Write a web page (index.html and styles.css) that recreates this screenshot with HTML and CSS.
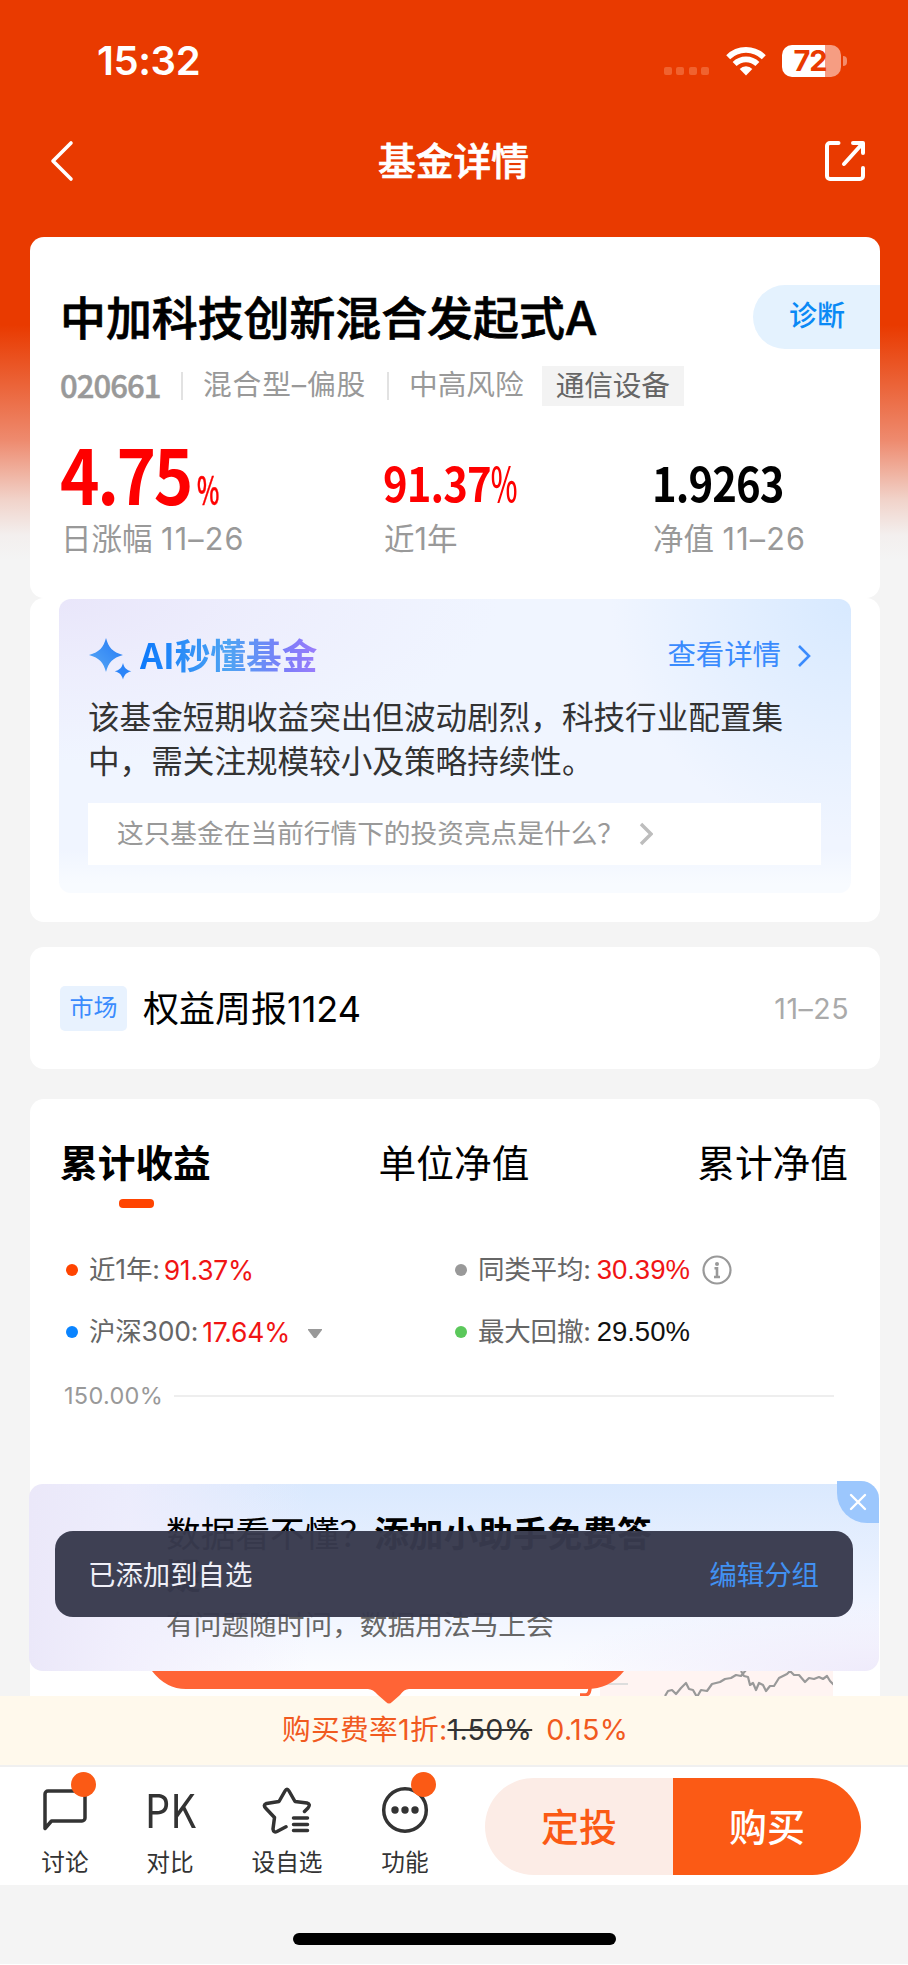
FILE: index.html
```html
<!DOCTYPE html>
<html lang="zh-CN">
<head>
<meta charset="utf-8">
<title>基金详情</title>
<link rel="stylesheet" href="styles.css">
</head>
<body>
<div class="phone">
  <header class="top">
    <div class="status">
      <span class="clock">15:32</span>
      <div class="signal"><i></i><i></i><i></i><i></i></div>
      <svg class="wifi" viewBox="0 0 40 30" width="40" height="30"><g fill="none" stroke="#fff" stroke-width="5.6"><path d="M2.2 11.2a25.2 25.2 0 0 1 35.6 0"/><path d="M8.6 18.1a16.2 16.2 0 0 1 22.8 0"/></g><path d="M20 29.5l-6.3-6.6a9 9 0 0 1 12.6 0z" fill="#fff"/></svg>
      <div class="battery"><span>72</span></div>
      <i class="nub"></i>
    </div>
    <div class="nav">
      <svg viewBox="0 0 24 42" width="24" height="42"><path d="M21 3L3 21l18 18" fill="none" stroke="#fff" stroke-width="3.6" stroke-linecap="round" stroke-linejoin="round"/></svg>
      <h1>基金详情</h1>
      <svg viewBox="0 0 42 42" width="42" height="42"><g fill="none" stroke="#fff" stroke-width="4" stroke-linecap="round" stroke-linejoin="round"><path d="M14.500 3H6a3 3 0 0 0-3 3v30a3 3 0 0 0 3 3h30a3 3 0 0 0 3-3v-8"/><path d="M29 3h10v10M38.500 3.500L20 24"/></g></svg>
    </div>
  </header>

  <section class="card fund">
    <div class="fund-head">
      <h2>中加科技创新混合发起式A</h2>
      <span class="diagnose">诊断</span>
    </div>
    <div class="meta">
      <b>020661</b><i></i><span class="kind">混合型–偏股</span><i></i><span>中高风险</span><em>通信设备</em>
    </div>
    <div class="figures">
      <div class="fig day"><div class="num red big">4.75<small>%</small></div><p>日涨幅 <span>11–26</span></p></div>
      <div class="fig year"><div class="num red">91.37<small>%</small></div><p>近1年</p></div>
      <div class="fig"><div class="num">1.9263</div><p>净值 <span>11–26</span></p></div>
    </div>
  </section>

  <section class="card insight">
    <div class="ai">
      <div class="ai-head">
        <svg viewBox="0 0 44 44" width="44" height="44"><defs><linearGradient id="spark" x1="0" y1="1" x2="1" y2="0"><stop offset="0" stop-color="#5aaaf5"/><stop offset="1" stop-color="#2379f5"/></linearGradient></defs><path d="M18 1c2.500 9.500 6.500 14 17 17-10.500 3-14.500 7.500-17 17C15.500 25.500 11.500 21 1 18 11.500 15 15.500 10.500 18 1z" fill="url(#spark)"/><path d="M35 26c1.300 4.800 3.300 7 8.300 8.300-5 1.300-7 3.500-8.300 8.300-1.300-4.800-3.300-7-8.300-8.300 5-1.300 7-3.500 8.300-8.300z" fill="#2b84f8"/></svg>
        <h3>AI秒懂基金</h3>
        <span class="more">查看详情</span>
        <svg viewBox="0 0 14 24" width="14" height="24"><path d="M2 2l10 10L2 22" fill="none" stroke="#3a8bfd" stroke-width="2.600"/></svg>
      </div>
      <p class="summary">该基金短期收益突出但波动剧烈，科技行业配置集<br>中，需关注规模较小及策略持续性。</p>
      <div class="ask"><span>这只基金在当前行情下的投资亮点是什么？</span><svg viewBox="0 0 14 24" width="14" height="24"><path d="M2 2l10 10L2 22" fill="none" stroke="#bdbdbd" stroke-width="3.400"/></svg></div>
    </div>
  </section>

  <section class="card report">
    <span class="tag">市场</span><span class="report-title">权益周报1124</span><time>11–25</time>
  </section>

  <section class="card chart">
    <div class="tabs"><span class="on">累计收益</span><span>单位净值</span><span>累计净值</span></div>
    <div class="legend">
      <div><i class="dot orange"></i><span>近1年:</span><b class="hot">91.37%</b></div>
      <div><i class="dot gray"></i><span>同类平均:</span><b class="hot wide">30.39%</b><svg class="info" viewBox="0 0 30 30" width="30" height="30"><circle cx="15" cy="15" r="13.500" fill="none" stroke="#999" stroke-width="2.200"/><circle cx="15" cy="9" r="2" fill="#999"/><path d="M12.500 13.300H15V22M12 22h6" fill="none" stroke="#999" stroke-width="2.600"/></svg></div>
      <div><i class="dot blue"></i><span>沪深300:</span><b class="hot">17.64%</b><svg class="caret" viewBox="0 0 14 10" width="14" height="10"><path d="M0 0h14v1L8 9H6L0 1z" fill="#999"/></svg></div>
      <div><i class="dot green"></i><span>最大回撤:</span><b class="wide">29.50%</b></div>
    </div>
    <div class="axis"><span>150.00%</span><i></i></div>
    <svg class="plot" viewBox="0 0 803 25" width="803" height="25"><path d="M570 0h233v25H570z" fill="#fff4f2"/><path d="M570 13h28" stroke="#ddd" stroke-width="2"/><path d="M550 24h6q4-1 4-8" fill="none" stroke="#ff6436" stroke-width="3.500"/><path d="M635 25l3-5 4-1 4 4 5-6 5-5 3 6 4 1 4 7 4-7 6 1 5-7 8-2 5-3 6-1 5-3 5 1 5-6M711 0l3 5 4 1 2 8 3-2 3 7 3-7 4 2 3 6 4-5 4 0 5-8 4-2 4-2 3-3 4 4 5 0 6 7 4-4 5 1 5-2 4 2 4-3 3 5 4 4 4-1 4 6 3 7 5-3 4-6" fill="none" stroke="#999" stroke-width="2.200" stroke-linejoin="round"/></svg>
  </section>

  <div class="fee">购买费率1折:<s>1.50%</s><span>0.15%</span></div>

  <nav class="actions">
    <div class="item talk"><svg viewBox="0 0 48 48" width="48" height="48"><path d="M4.500 42.500V8a3 3 0 0 1 3-3h34a3 3 0 0 1 3 3v24a3 3 0 0 1-3 3H11z" transform="translate(-.5 0)" fill="none" stroke="#333" stroke-width="3.500" stroke-linejoin="round"/></svg><i class="badge"></i><span>讨论</span></div>
    <div class="item pk"><strong>PK</strong><span>对比</span></div>
    <div class="item star"><svg viewBox="0 0 50 48" width="50" height="48"><g fill="none" stroke="#333" stroke-width="3.500" stroke-linecap="round" stroke-linejoin="round"><path d="M42.500 25.500l3.500-3.500q3-4-1-5l-12-1.500L27 5q-2-3.500-4 0l-6 10.500L4.500 17.500q-4 1.500-.5 5l8.500 9L11 43q.5 4 4 2.500l9-4.700"/><path d="M31.500 32h14M31.500 38.500h14M31.500 44.500h14"/></g></svg><span>设自选</span></div>
    <div class="item func"><svg viewBox="0 0 48 48" width="48" height="48"><circle cx="24" cy="24" r="21.300" fill="none" stroke="#333" stroke-width="3.500"/><g fill="#333"><circle cx="14" cy="24" r="3.700"/><circle cx="24" cy="24" r="3.700"/><circle cx="34" cy="24" r="3.700"/></g></svg><i class="badge"></i><span>功能</span></div>
    <div class="buttons"><span class="plan">定投</span><span class="buy">购买</span></div>
  </nav>
  <footer class="home"><i></i></footer>

  <svg class="bubble" viewBox="0 0 474 34" width="474" height="34"><path d="M0 0h472q-14 18-38 18H257q-5 0-9 6l-8 7q-3 3-6 0l-8-7q-5-6-10-6H34Q14 18 0 0z" fill="#ff6436"/></svg>

  <aside class="banner">
    <div class="banner-title">数据看不懂？<b>添加小助手免费答</b><br><b>疑!</b></div>
    <div class="banner-sub">有问题随时问，数据用法马上会</div>
    <div class="close"><svg viewBox="0 0 18 18" width="18" height="18"><path d="M2 2l14 14M16 2L2 16" stroke="#fff" stroke-width="2.400" stroke-linecap="round"/></svg></div>
  </aside>
  <div class="toast"><span>已添加到自选</span><a>编辑分组</a></div>
</div>
</body>
</html>
```

FILE: styles.css
```css
* { box-sizing: border-box; margin: 0; padding: 0; }
body {
  width: 908px;
  height: 1965px;
  overflow: hidden;
  font-family: Inter, "Noto Sans CJK SC", sans-serif;
  background: #fff;
  color: #000;
}
i, em { font-style: normal; display: block; }
svg { display: block; flex: none; }
.phone {
  position: relative;
  width: 908px;
  height: 1964px;
  overflow: hidden;
  white-space: nowrap;
  background: linear-gradient(#e93a00 0, #e93a00 325px, #ea5626 366px, #ee8a6e 440px, #f1d3ca 500px, #f3efee 535px, #f4f4f4 560px);
}

/* Status bar and title */
.top { height: 237px; color: #fff; }
.status { height: 121px; padding: 0 61px 0 97px; display: flex; align-items: center; }
.clock { font-size: 40px; font-weight: 600; line-height: 48px; letter-spacing: -0.4px; margin-right: auto; }
.signal { display: flex; gap: 4.500px; margin: 21px 17px 0 0; }
.signal i { width: 8px; height: 8px; border-radius: 2px; background: #f0622f; }
.wifi { margin-right: 16px; }
.battery {
  width: 59px; height: 32px; border-radius: 10px; padding-right: 3px;
  background: linear-gradient(90deg, #fff 43px, #f69d82 43px);
  color: #e93a00; font-size: 29px; font-weight: 700; line-height: 32px; text-align: center; letter-spacing: -1px;
}
.nub { width: 4px; height: 10px; margin-left: 2px; border-radius: 0 4px 4px 0; background: #f48c6b; }
.nav { height: 80px; padding: 0 42px 0 50px; display: flex; align-items: center; justify-content: space-between; }
.nav h1 { font-size: 37.700px; font-weight: 500; line-height: 48px; margin-left: 9px; -webkit-text-stroke: .7px #fff; }

.card { margin: 0 28px 0 30px; background: #fff; border-radius: 14px; }

/* Fund overview */
.fund { height: 361px; padding: 48px 0 0 30px; }
.fund-head { display: flex; align-items: center; justify-content: space-between; height: 64px; }
.fund-head h2 { font-size: 45.900px; line-height: 64px; font-weight: 500; padding-top: 3px; -webkit-text-stroke: .7px #000; }
.diagnose { width: 127px; height: 64px; border-radius: 32px 0 0 32px; background: #e4f2fe; color: #0a89f5; font-size: 28px; line-height: 63px; padding-left: 36px; font-weight: 500; }
.meta { display: flex; align-items: center; height: 40px; margin-top: 17px; font-size: 28.700px; line-height: 36px; color: #999; }
.meta span { margin-top: -2px; }
.meta b { font-family: "Noto Sans CJK SC", sans-serif; font-size: 31px; font-weight: 500; line-height: 40px; letter-spacing: -.9px; width: 121px; margin-top: -3px; -webkit-text-stroke: .5px #999; }
.meta i { width: 2px; height: 28px; background: #e2e2e2; margin-right: 20px; }
.meta .kind { width: 184px; letter-spacing: .9px; }
.meta em { margin-left: 18px; background: #f3f3f3; color: #666; padding: 0 14px; height: 40px; line-height: 40px; letter-spacing: -.2px; }
.figures { display: flex; margin-top: 34px; }
.fig.day { width: 323px; }
.fig.year { width: 269px; }
.num { height: 72px; font: 700 47px/72px "Noto Sans CJK SC", sans-serif; padding-top: 6px; letter-spacing: -1px; display: flex; transform: scaleX(.89); transform-origin: 0 50%; }
.num.big { font-size: 75px; letter-spacing: -2.700px; padding-top: 0; line-height: 66px; transform: scaleX(.895); }
.num small { width: 30px; font-size: 47px; font-weight: 500; transform: scaleX(.68); transform-origin: 0 50%; letter-spacing: 0; }
.num.big small { font-size: 39px; margin: 25px 0 0 7px; line-height: 46px; height: 46px; -webkit-text-stroke: .5px #fe0000; }
.red { color: #fe0000; }
.fig p { font-size: 30.500px; line-height: 44px; color: #999; padding-left: 1px; margin-top: 5px; }
.fig p span { letter-spacing: 1.200px; }

/* AI summary */
.insight { height: 324px; padding: 1px 29px; }
.ai {
  height: 294px; border-radius: 12px; padding: 32px 30px 0 29px;
  background:
    linear-gradient(rgba(248,251,255,0) 0, rgba(248,251,255,0) 250px, #f8fbff 285px),
    radial-gradient(circle at 100% 0, #d7e9ff 0, rgba(215,233,255,0) 240px),
    radial-gradient(ellipse at 0 0, #e9e6fa 0, rgba(236,235,252,.7) 200px, rgba(240,245,255,0) 440px),
    #f0f5ff;
}
.ai-head { height: 58px; display: flex; align-items: center; }
.ai-head h3 { font: 700 35.700px/50px "Noto Sans CJK SC", sans-serif; margin: 0 auto 12px 8px; background: linear-gradient(90deg, #0b78fb, #4fa4f3 50%, #7c7df9 82%, #9a7dfb); -webkit-background-clip: text; background-clip: text; color: transparent; }
.more { font-size: 28.400px; line-height: 40px; color: #3a8bfd; margin: 0 16px 10px 0; }
.ai-head svg:first-child { margin-bottom: 2px; }
.ai-head svg:last-child { margin: 0 10px 8px 0; }
.summary { font-size: 31.600px; line-height: 44px; color: #333; margin-top: 7px; }
.ask { height: 62px; margin-top: 19px; background: #fff; display: flex; align-items: center; gap: 15px; padding-left: 29px; color: #999; font-size: 26.700px; line-height: 36px; }
.ask span { margin-top: -3px; }

/* Weekly report */
.report { height: 122px; margin-top: 25px; padding: 0 31px 0 30px; display: flex; align-items: center; }
.tag { width: 67px; height: 45px; border-radius: 5px; background: #e8f2fe; color: #3a8bfd; font-size: 24px; line-height: 44px; text-align: center; }
.report-title { font-size: 36px; line-height: 50px; margin: 2px auto 0 16px; }
.report time { font-size: 28.500px; color: #aaa; letter-spacing: .5px; }

/* Returns */
.chart { height: 597px; margin-top: 30px; border-radius: 14px 14px 0 0; position: relative; }
.tabs { display: flex; justify-content: space-between; padding: 39px 32px 0 30px; font-size: 37.700px; line-height: 50px; }
.tabs span { height: 72px; }
.tabs .on { font-weight: 700; }
.tabs .on::after { content: ""; display: block; width: 35px; height: 9px; border-radius: 4px; background: #ff4400; margin: 11px 0 0 59px; }
.legend { display: grid; grid-template-columns: 389px 1fr; grid-auto-rows: 62px; padding: 29px 0 0 36px; font-size: 26.500px; line-height: 36px; color: #666; }
.legend > div { display: flex; align-items: center; }
.legend span { margin-top: -2px; letter-spacing: -.2px; }
.dot { width: 12px; height: 12px; border-radius: 50%; margin-right: 11px; }
.orange { background: #ff4400; }
.gray { background: #999; }
.blue { background: #0a84ff; }
.green { background: #5bc85b; }
.legend b { font-weight: 400; margin-left: 4px; color: #111; letter-spacing: -.2px; }
.legend b.hot { color: #f01414; }
.legend b.wide { margin-left: 6px; font-family: "Liberation Sans", sans-serif; font-size: 27.500px; letter-spacing: 0; }
.info { margin-left: 12px; }
.caret { margin: 4px 0 0 18px; }
.axis { display: flex; align-items: center; margin: 18px 46px 0 34px; font-size: 23.500px; line-height: 30px; color: #999; letter-spacing: .3px; }
.axis span { width: 110px; }
.axis i { flex: 1; height: 2px; background: #eee; }
.plot { position: absolute; left: 0; bottom: 0; }

/* Fee strip */
.fee { height: 69px; background: #fff9ec; color: #f15a1f; font-size: 28.700px; line-height: 68px; padding-left: 282px; letter-spacing: .3px; }
.fee s { color: #333; }
.fee span { margin-left: 14px; }

/* Bottom actions */
.actions { height: 120px; background: #fff; border-top: 2px solid #f0f0f0; display: flex; }
.item { position: relative; display: flex; flex-direction: column; align-items: center; padding-top: 19px; font-size: 23.700px; line-height: 34px; color: #333; }
.item span { margin-top: 12px; }
.talk { width: 48px; margin-left: 41px; }
.pk { width: 52px; margin-left: 55px; }
.pk strong { font: 400 46px/44px "Noto Sans CJK SC", sans-serif; height: 48px; transform: scaleX(.87); letter-spacing: 0; }
.star { width: 74px; margin-left: 54px; }
.func { width: 50px; margin-left: 56px; }
.badge { position: absolute; right: -7px; top: 5px; width: 25px; height: 25px; border-radius: 50%; background: #fb5a15; }
.func .badge { right: -6px; }
.buttons { display: flex; width: 376px; height: 97px; margin: 11px 0 0 55px; border-radius: 49px; overflow: hidden; font-size: 38px; line-height: 98px; font-weight: 500; text-align: center; }
.plan { flex: 1; background: #fcece6; color: #fb5a15; }
.buy { flex: 1; background: #fb5a15; color: #fff; }
.home { height: 79px; background: #f4f4f4; padding: 48px 0 0 293px; }
.home i { width: 323px; height: 12px; border-radius: 6px; background: #000; }

/* Floating layers */
.bubble { position: absolute; left: 152px; top: 1671px; }
.banner {
  position: absolute; left: 29px; top: 1484px; width: 850px; height: 187px; border-radius: 14px; padding: 29px 0 0 137px;
  background:
    linear-gradient(90deg, #ebe8f9 0, rgba(240,237,252,.8) 100px, rgba(240,240,253,0) 280px),
    radial-gradient(ellipse at 100% 100%, #efebfb 0, rgba(239,235,251,0) 320px),
    linear-gradient(#dae9fe, #eef3ff 60%, #fbfcff);
}
.banner-title { font-size: 34.700px; line-height: 42px; }
.banner-title b { font-weight: 700; }
.banner-sub { font-size: 27.700px; line-height: 36px; color: #666; margin-top: 10px; }
.close { position: absolute; right: 0; top: -3px; width: 42px; height: 42px; background: #9cc7fd; border-radius: 0 18px 0 30px; display: flex; align-items: center; justify-content: center; }
.toast {
  position: absolute; left: 55px; top: 1531px; width: 798px; height: 86px; border-radius: 18px; padding: 0 34px 3px 33px;
  background: rgba(56,58,77,.97); color: #f0f0f8; font-size: 27.400px;
  display: flex; align-items: center; justify-content: space-between;
}
.toast a { color: #4191f2; }
```
